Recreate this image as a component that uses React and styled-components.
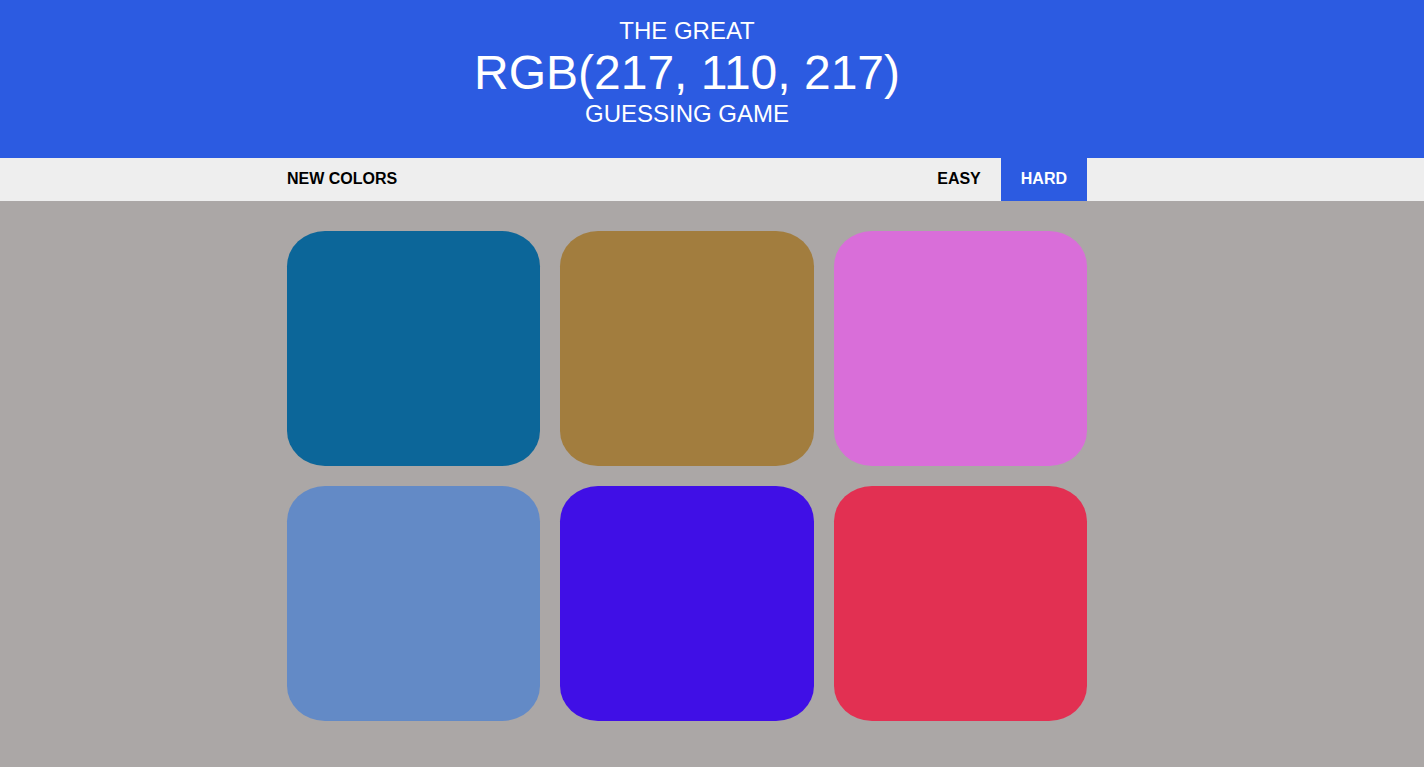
import React from "react";
import styled, { createGlobalStyle } from "styled-components";

const GlobalStyle = createGlobalStyle`
  html, body {
    margin: 0;
    padding: 0;
    background: #aba7a6;
    font-family: "Liberation Sans", Arial, sans-serif;
  }
`;

const Page = styled.div`
  min-height: 767px;
  background: #aba7a6;
`;

const Header = styled.header`
  background: #2c5be1;
  color: #ffffff;
  padding: 17px 0 30px;
`;

const Column = styled.div`
  width: 800px;
  margin-left: calc(50% - 425px);
`;

const Title = styled.h1`
  margin: 0;
  font-weight: normal;
  text-align: center;
  text-transform: uppercase;
`;

const TitleLine = styled.span`
  display: block;
  font-size: ${(p) => (p.$big ? "48px" : "24px")};
  line-height: ${(p) => (p.$big ? "55px" : "28px")};
`;

const Toolbar = styled.nav`
  background: #eeeeee;
  height: 43px;
`;

const ToolbarInner = styled(Column)`
  display: flex;
  align-items: stretch;
  height: 100%;
`;

const Button = styled.button`
  border: none;
  outline: none;
  margin: 0;
  padding: 12px 20px 13px;
  font-family: "Liberation Sans", Arial, sans-serif;
  font-weight: bold;
  font-size: 16px;
  line-height: 18px;
  text-transform: uppercase;
  cursor: pointer;
  background: ${(p) => (p.$active ? "#2c5be1" : "transparent")};
  color: ${(p) => (p.$active ? "#ffffff" : "#000000")};
`;

const NewColors = styled(Button)`
  padding-left: 0;
  margin-right: auto;
`;

const Board = styled(Column)`
  display: grid;
  grid-template-columns: repeat(3, 1fr);
  gap: 20px;
  padding-top: 30px;
`;

const Square = styled.div`
  height: 235px;
  border-radius: 15%;
  background: ${(p) => p.$color};
`;

const colors = [
  "#0c6699",
  "#a27d3e",
  "#d96ed9",
  "#638ac6",
  "#400fe6",
  "#e23052",
];

export default function App() {
  return (
    <Page>
      <GlobalStyle />
      <Header>
        <Column>
          <Title>
            <TitleLine>The Great</TitleLine>
            <TitleLine $big>RGB(217, 110, 217)</TitleLine>
            <TitleLine>Guessing Game</TitleLine>
          </Title>
        </Column>
      </Header>
      <Toolbar>
        <ToolbarInner>
          <NewColors>New Colors</NewColors>
          <Button>Easy</Button>
          <Button $active>Hard</Button>
        </ToolbarInner>
      </Toolbar>
      <Board>
        {colors.map((c) => (
          <Square key={c} $color={c} />
        ))}
      </Board>
    </Page>
  );
}
